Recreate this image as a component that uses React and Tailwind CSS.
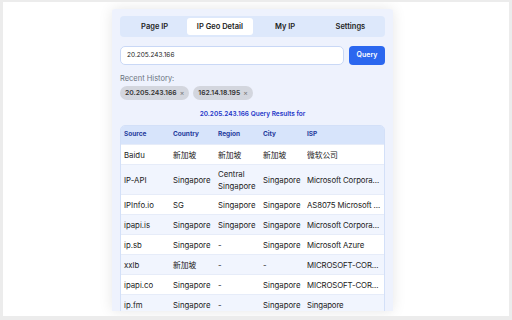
import React from "react";

const tabs = ["Page IP", "IP Geo Detail", "My IP", "Settings"];

const rows = [
  { source: "Baidu", country: "新加坡", region: "新加坡", city: "新加坡", isp: "微软公司" },
  { source: "IP-API", country: "Singapore", region: "Central Singapore", city: "Singapore", isp: "Microsoft Corporation" },
  { source: "IPInfo.io", country: "SG", region: "Singapore", city: "Singapore", isp: "AS8075 Microsoft Corporation" },
  { source: "ipapi.is", country: "Singapore", region: "Singapore", city: "Singapore", isp: "Microsoft Corporation" },
  { source: "ip.sb", country: "Singapore", region: "-", city: "Singapore", isp: "Microsoft Azure" },
  { source: "xxlb", country: "新加坡", region: "-", city: "-", isp: "MICROSOFT-CORP-MSN" },
  { source: "ipapi.co", country: "Singapore", region: "-", city: "Singapore", isp: "MICROSOFT-CORP-MSN" },
  { source: "ip.fm", country: "Singapore", region: "-", city: "Singapore", isp: "Singapore" },
];

const cols = "grid grid-cols-[49px_45px_45px_44px_minmax(0,1fr)] items-center";

export default function App() {
  return (
    <div
      className="w-[512px] h-[320px] bg-[#ececec] pt-[2px] pl-[3px] pr-[3px] pb-[4px] overflow-hidden"
      style={{ fontFamily: "Inter, 'Noto Sans CJK SC', sans-serif" }}
    >
      <div className="w-full h-full bg-white overflow-hidden pt-[7px]">
        {/* popup panel */}
        <div className="ml-[109px] w-[281px] h-[302px] overflow-hidden bg-[#eef2fd] rounded-t-[3px] shadow-[0_0_14px_rgba(0,0,0,0.10)] px-[8px] pt-[7px]">
          {/* tabs */}
          <div className="flex h-[21px] rounded-[4px] bg-[#dde8fb] p-[2px]">
            {tabs.map((t) => (
              <div
                key={t}
                className={`flex-1 flex items-center justify-center rounded-[3px] text-[7.5px] font-semibold text-[#222] ${
                  t === "IP Geo Detail" ? "bg-white" : ""
                }`}
              >
                {t}
              </div>
            ))}
          </div>

          {/* query */}
          <div className="flex gap-[5px] mt-[9px] h-[19px]">
            <div className="flex-1 flex items-center bg-white border border-[#c9d8f6] rounded-[5px] pl-[6px] text-[6.5px] text-[#222]">
              20.205.243.166
            </div>
            <button className="w-[36px] rounded-[4px] bg-[#2b67ef] text-white text-[7px] font-semibold">
              Query
            </button>
          </div>

          {/* history */}
          <div className="mt-[9px] text-[7.5px] text-[#6b7280] leading-[10px]">Recent History:</div>
          <div className="flex gap-[4px] mt-[2px]">
            {["20.205.243.166", "162.14.18.195"].map((ip) => (
              <div
                key={ip}
                className="flex items-center gap-[3px] h-[14px] px-[5px] rounded-full bg-[#d3d6de] text-[6.8px] font-semibold text-[#333]"
              >
                {ip}
                <span className="text-[#777] font-normal text-[7px]">×</span>
              </div>
            ))}
          </div>

          <div className="mt-[9px] text-center text-[6.5px] font-semibold text-[#2436c8] leading-[10px]">
            20.205.243.166 Query Results for
          </div>

          {/* results table */}
          <div className="mt-[6px] border border-[#d3e0f8] rounded-t-[5px] overflow-hidden">
            <div className={`${cols} h-[18px] bg-[#d7e4fb] text-[6.5px] font-bold text-[#1f3a9b] px-[3px]`}>
              <span>Source</span>
              <span>Country</span>
              <span>Region</span>
              <span>City</span>
              <span>ISP</span>
            </div>
            {rows.map((r, i) => (
              <div
                key={r.source}
                className={`${cols} px-[3px] text-[7.8px] text-[#222] leading-[12px] border-t border-[#e6ecf9] ${
                  r.source === "IP-API" ? "h-[30px]" : "h-[20px]"
                } ${i % 2 === 1 ? "bg-[#f1f5fe]" : "bg-white"}`}
              >
                <span>{r.source}</span>
                <span>{r.country}</span>
                <span className="pr-[4px]">{r.region}</span>
                <span>{r.city}</span>
                <span className="truncate tracking-[-0.1px]">{r.isp}</span>
              </div>
            ))}
          </div>
        </div>
      </div>
    </div>
  );
}
